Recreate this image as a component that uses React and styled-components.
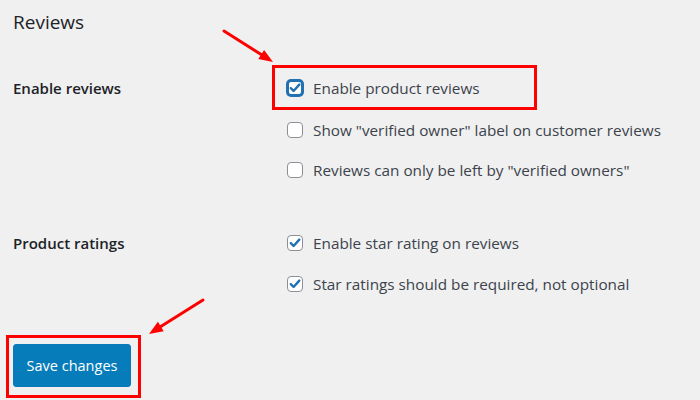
import React from "react";
import styled, { createGlobalStyle } from "styled-components";

const Global = createGlobalStyle`
  html, body { margin: 0; padding: 0; background: #f0f0f1; }
  body { font-family: "Open Sans", "Noto Sans", sans-serif; }
  * { box-sizing: border-box; }
`;

const Page = styled.div`
  position: relative;
  width: 700px;
  height: 400px;
  overflow: hidden;
  padding: 9px 13px 0 13px;
  background: #f0f0f1;
`;

const Title = styled.h2`
  margin: 0;
  font-size: 19px;
  line-height: 26px;
  font-weight: 400;
  color: #1d2327;
`;

const FormRow = styled.div`
  display: grid;
  grid-template-columns: 259px 1fr;
  margin-top: ${(p) => p.$top}px;
`;

const RowLabel = styled.div`
  height: ${(p) => p.$h}px;
  display: flex;
  align-items: center;
  font-size: 15px;
  font-weight: 600;
  color: #1d2327;
`;

const Options = styled.div`
  display: flex;
  flex-direction: column;
`;

const Option = styled.label`
  display: flex;
  align-items: center;
  gap: 10px;
  height: ${(p) => p.$h || 40}px;
  padding-left: 15px;
  font-size: 15.3px;
  color: #3c434a;
`;

const Highlight = styled.div`
  width: 265px;
  height: 45px;
  border: 3px solid #ff0000;
  display: flex;
  align-items: center;
  padding-left: 12px;
  gap: 10px;
  font-size: 15.3px;
  color: #3c434a;
`;

const Box = styled.span`
  width: 16px;
  height: 16px;
  flex: none;
  border-radius: 4px;
  background: #fff;
  border: ${(p) => (p.$focus ? "2px solid #2271b1" : "1px solid #8c8f94")};
  box-shadow: ${(p) => (p.$focus ? "0 0 0 1px #2271b1" : "none")};
  display: flex;
  align-items: center;
  justify-content: center;
`;

const ButtonFrame = styled.div`
  display: inline-block;
  margin-top: 31px;
  margin-left: -7px;
  border: 3px solid #ff0000;
  padding: 6px 7px 8px 4px;
`;

const SaveButton = styled.button`
  width: 118px;
  height: 43px;
  border: 1px solid #0a7aba;
  border-radius: 3px;
  background: #077cba;
  color: #fff;
  font-family: "Open Sans", "Noto Sans", sans-serif;
  font-size: 14.5px;
  cursor: pointer;
  padding: 0;
`;

const Arrows = styled.svg`
  position: absolute;
  left: 0;
  top: 0;
  pointer-events: none;
`;

function Check({ checked, focus }) {
  return (
    <Box $focus={focus}>
      {checked && (
        <svg width="12" height="12" viewBox="0 0 12 12">
          <path d="M1.8 6.2 L4.6 9 L10.3 2.6" fill="none" stroke="#2271b1" strokeWidth="2.4" strokeLinecap="round" strokeLinejoin="round" />
        </svg>
      )}
    </Box>
  );
}

export default function App() {
  return (
    <>
      <Global />
      <Page>
        <Title>Reviews</Title>
        <FormRow $top={30}>
          <RowLabel $h={45}>Enable reviews</RowLabel>
          <Options>
            <Highlight>
              <Check checked focus />
              Enable product reviews
            </Highlight>
            <Option>
              <Check />
              Show "verified owner" label on customer reviews
            </Option>
            <Option>
              <Check />
              Reviews can only be left by "verified owners"
            </Option>
          </Options>
        </FormRow>
        <FormRow $top={32}>
          <RowLabel $h={41}>Product ratings</RowLabel>
          <Options>
            <Option $h={41}>
              <Check checked />
              Enable star rating on reviews
            </Option>
            <Option $h={41}>
              <Check checked />
              Star ratings should be required, not optional
            </Option>
          </Options>
        </FormRow>
        <ButtonFrame>
          <SaveButton>Save changes</SaveButton>
        </ButtonFrame>
        <Arrows width="700" height="400" viewBox="0 0 700 400">
          <line x1="224" y1="31" x2="262" y2="55" stroke="#ff0000" strokeWidth="3" strokeLinecap="round" />
          <polygon points="273,62 258.3,59.1 264.1,49.9" fill="#ff0000" />
          <line x1="203" y1="300" x2="160" y2="327" stroke="#ff0000" strokeWidth="3" strokeLinecap="round" />
          <polygon points="149,334 157.9,321.8 163.7,331.2" fill="#ff0000" />
        </Arrows>
      </Page>
    </>
  );
}
